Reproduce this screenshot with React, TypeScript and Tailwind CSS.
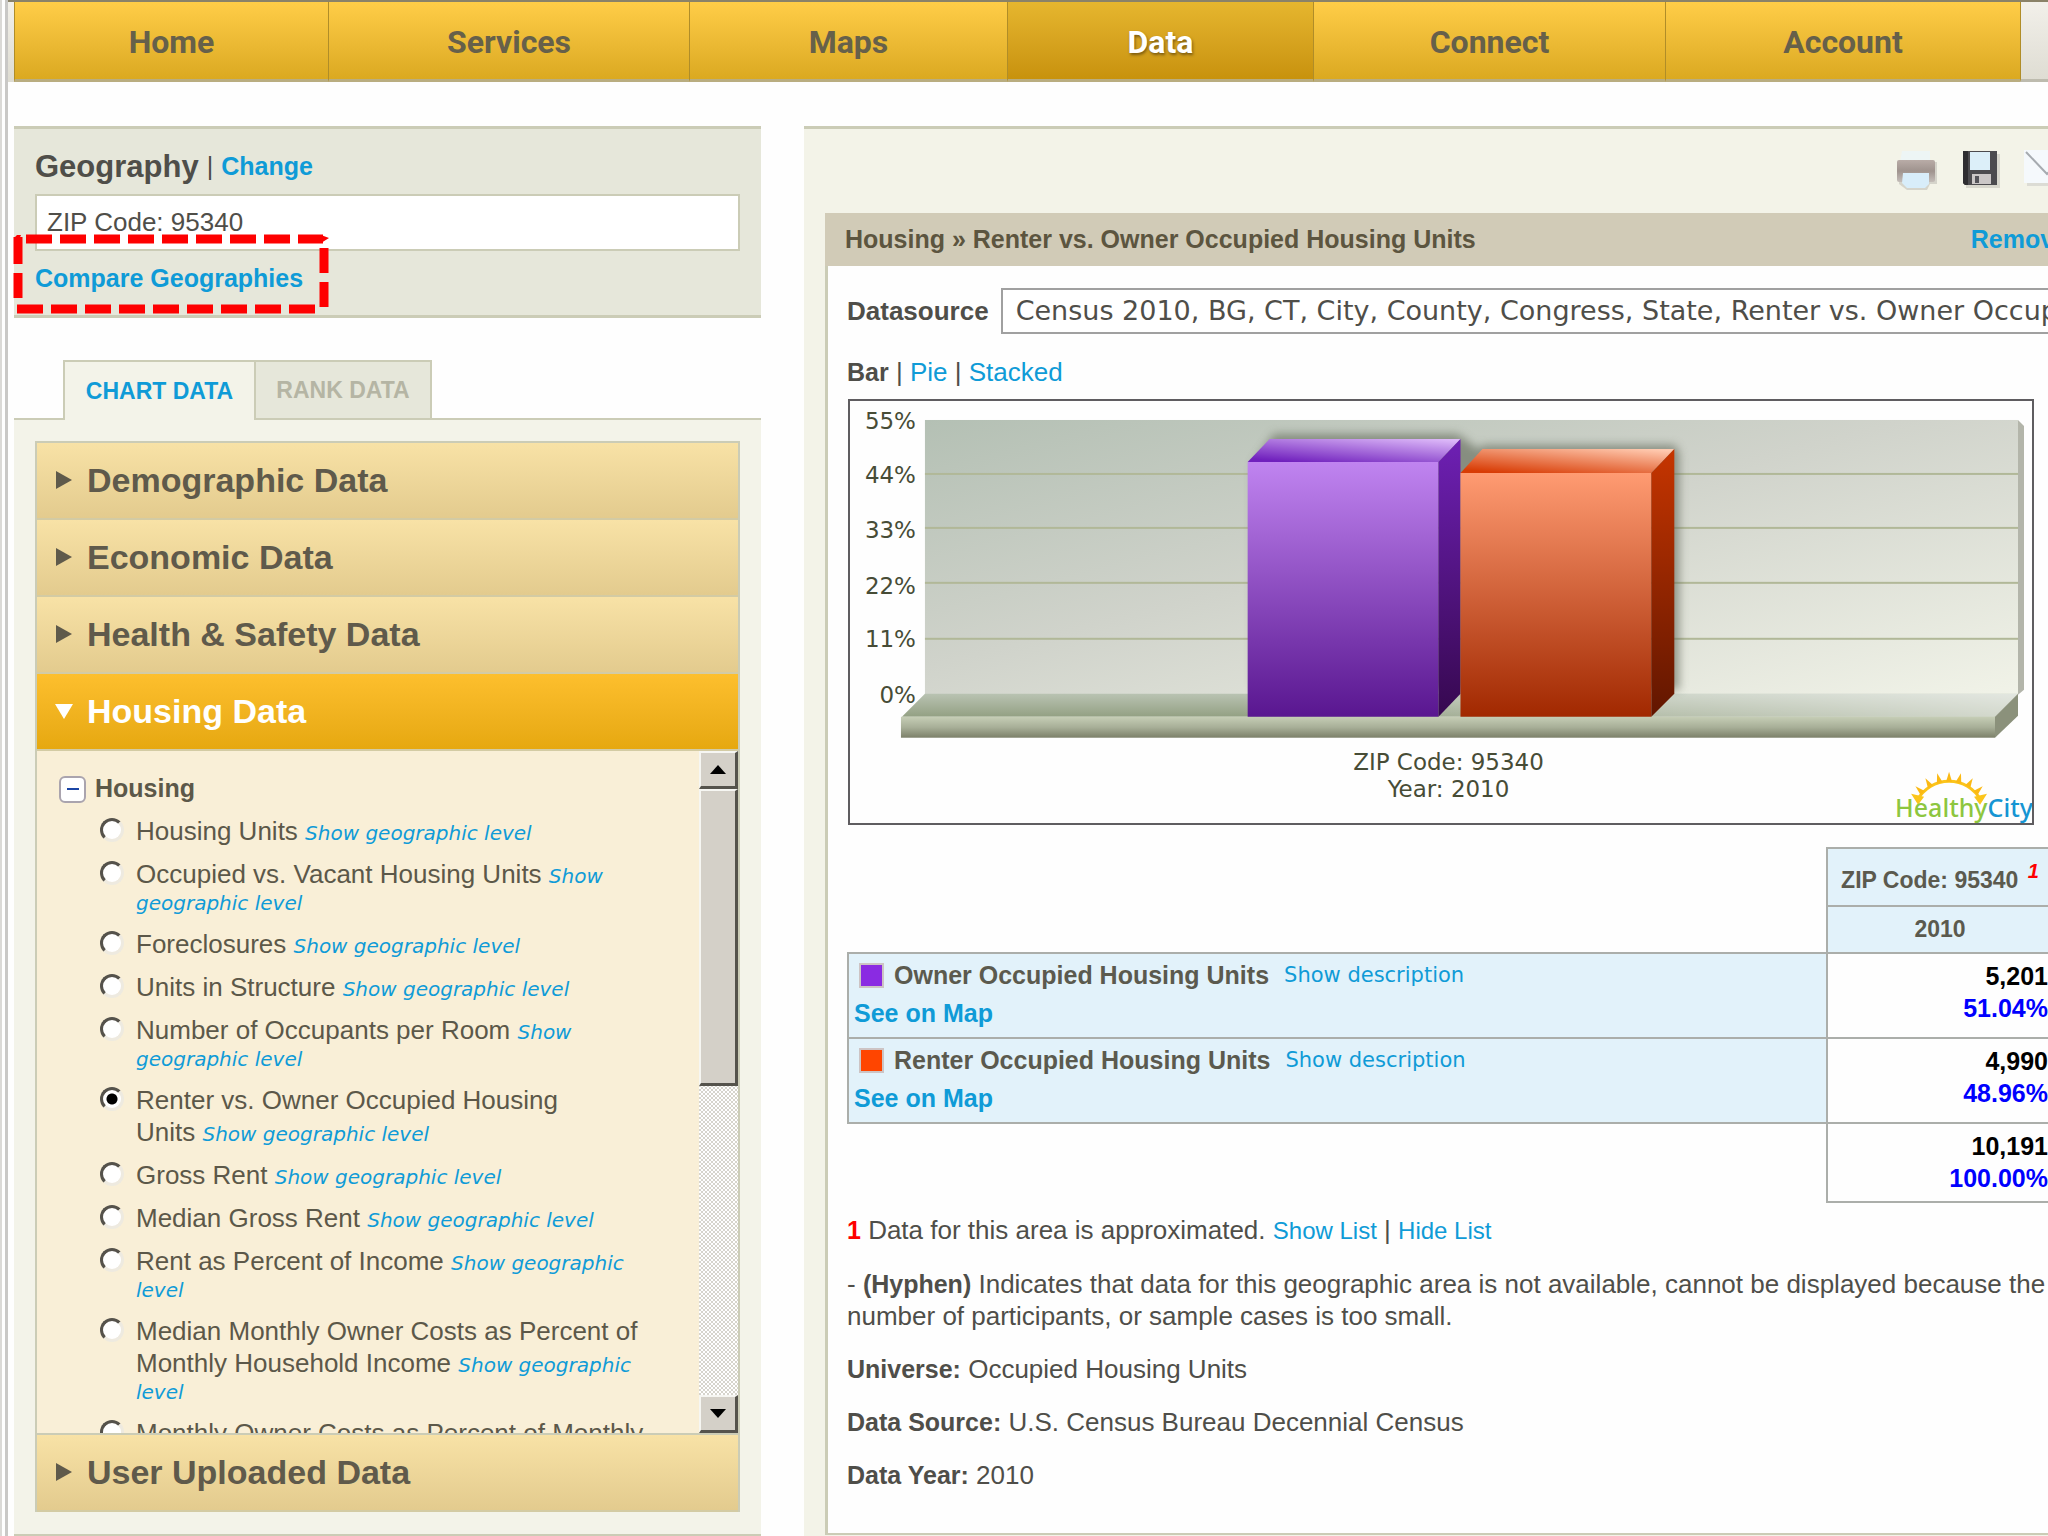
import React, { useState } from 'react';
import clsx from 'clsx';

const navItems = ['Home', 'Services', 'Maps', 'Data', 'Connect', 'Account'];

type IndicatorLine = { text?: string; link?: string };

const indicators: { id: string; lines: IndicatorLine[] }[] = [
  { id: 'units', lines: [{ text: 'Housing Units', link: 'Show geographic level' }] },
  { id: 'vacant', lines: [{ text: 'Occupied vs. Vacant Housing Units', link: 'Show' }, { link: 'geographic level' }] },
  { id: 'foreclosures', lines: [{ text: 'Foreclosures', link: 'Show geographic level' }] },
  { id: 'structure', lines: [{ text: 'Units in Structure', link: 'Show geographic level' }] },
  { id: 'occupants', lines: [{ text: 'Number of Occupants per Room', link: 'Show' }, { link: 'geographic level' }] },
  { id: 'tenure', lines: [{ text: 'Renter vs. Owner Occupied Housing' }, { text: 'Units', link: 'Show geographic level' }] },
  { id: 'gross', lines: [{ text: 'Gross Rent', link: 'Show geographic level' }] },
  { id: 'median-gross', lines: [{ text: 'Median Gross Rent', link: 'Show geographic level' }] },
  { id: 'rent-percent', lines: [{ text: 'Rent as Percent of Income', link: 'Show geographic' }, { link: 'level' }] },
  {
    id: 'median-costs',
    lines: [
      { text: 'Median Monthly Owner Costs as Percent of' },
      { text: 'Monthly Household Income', link: 'Show geographic' },
      { link: 'level' },
    ],
  },
  { id: 'costs', lines: [{ text: 'Monthly Owner Costs as Percent of Monthly' }] },
];

const rows = [
  { label: 'Owner Occupied Housing Units', swatch: 'bg-[#8a2be2]', count: '5,201', percent: '51.04%' },
  { label: 'Renter Occupied Housing Units', swatch: 'bg-[#ff4500]', count: '4,990', percent: '48.96%' },
];

const gridLines = [74, 128, 183, 239];
const axisLabels = [
  { label: '55%', y: 29 },
  { label: '44%', y: 83 },
  { label: '33%', y: 138 },
  { label: '22%', y: 194 },
  { label: '11%', y: 247 },
  { label: '0%', y: 303 },
];

function NavBar() {
  return (
    <nav className="grid h-[82px] grid-cols-[314fr_361fr_318fr_306fr_352fr_355fr_28fr] border-t-2 border-[#8a8268] bg-gradient-to-b from-[#f2f0ea] to-[#dedcd2] pl-[6px]">
      {navItems.map((item) => (
        <a
          key={item}
          href="#"
          className={clsx(
            'flex items-center justify-center border-b-[3px] border-l border-b-[#b9ad80] border-l-[#b08d28] pt-[3px] font-[Roboto,sans-serif] text-[32px] font-bold',
            item === 'Data'
              ? 'bg-gradient-to-b from-[#e6b62e] to-[#c8920c] text-white [text-shadow:1px_2px_3px_#7a5a10]'
              : 'bg-gradient-to-b from-[#ffcd47] to-[#dba920] text-[#66604a]'
          )}
        >
          {item}
        </a>
      ))}
      <span className="border-b-[3px] border-l border-b-[#bdbbae] border-l-[#b08d28]" />
    </nav>
  );
}

function DashedHighlight() {
  return (
    <svg className="pointer-events-none absolute -left-px top-[105px]" width="318" height="80" viewBox="0 0 318 80" fill="none" stroke="#fe0000" strokeWidth="9" aria-hidden="true">
      <path d="M13 5H310" strokeDasharray="26 8" />
      <path d="M4 75H303" strokeDasharray="26 8" />
      <path d="M5 3V30M5 39V64M311 14V39M311 48V73" />
      <path d="M1 4L4 1L8 1L5 8ZM308 1L316 4L308 9Z" fill="#fe0000" stroke="none" />
    </svg>
  );
}

function GeographyBox() {
  return (
    <section className="relative border-y-[3px] border-[#cbccb6] bg-[#e6e7da] px-[21px] pb-[21px] pt-[22px]">
      <div className="flex h-8 items-center gap-2 text-[25px] font-bold">
        <label htmlFor="geography" className="text-[31px]">Geography</label>
        <span className="font-normal">|</span>
        <a href="#" className="text-[#0f9bd7]">Change</a>
      </div>
      <input
        id="geography"
        readOnly
        defaultValue="ZIP Code: 95340"
        className="mt-[11px] block h-[57px] w-full border-2 border-[#cbccb6] bg-white px-[10px] text-[26px] outline-none"
      />
      <a href="#" className="mt-[11px] block text-[25px] font-bold leading-8 text-[#0f9bd7]">Compare Geographies</a>
      <DashedHighlight />
    </section>
  );
}

function Arrow({ open }: { open?: boolean }) {
  return (
    <svg width="20" height="20" viewBox="0 0 20 20" fill="currentColor" aria-hidden="true">
      <path d={open ? 'M1 2H19L10 17Z' : 'M2 0L18 9L2 18Z'} />
    </svg>
  );
}

function AccordionHeader({ title, open }: { title: string; open?: boolean }) {
  return (
    <button
      type="button"
      aria-expanded={!!open}
      className={clsx(
        'flex h-[77px] w-full items-center gap-[13px] border-b-2 border-[#d3cba4] pl-[17px] text-left text-[34px] font-bold',
        open
          ? 'bg-gradient-to-b from-[#fdbf2d] to-[#e6a80f] text-white'
          : 'bg-gradient-to-b from-[#f8e2a6] to-[#e3cb8e] text-[#5f5a4b]'
      )}
    >
      <Arrow open={open} />
      {title}
    </button>
  );
}

function ScrollBar() {
  const raised = 'flex items-center justify-center border-2 border-b-[3px] border-r-[3px] border-[#f6f6f2] border-b-[#55534c] border-r-[#55534c] bg-[#d4d0c8]';
  return (
    <div className="flex w-[39px] flex-none flex-col bg-[repeating-conic-gradient(#d6d4cc_0_25%,#ffffff_0_50%)] bg-[length:4px_4px]">
      <button type="button" aria-label="Scroll up" className={clsx(raised, 'h-[38px]')}>
        <svg width="16" height="9" viewBox="0 0 16 9" aria-hidden="true"><path d="M0 9L8 0L16 9Z" /></svg>
      </button>
      <div className={clsx(raised, 'h-[297px]')} />
      <button type="button" aria-label="Scroll down" className={clsx(raised, 'mt-auto h-[38px]')}>
        <svg width="16" height="9" viewBox="0 0 16 9" aria-hidden="true"><path d="M0 0L8 9L16 0Z" /></svg>
      </button>
    </div>
  );
}

function IndicatorList() {
  const [selected, setSelected] = useState('tenure');

  return (
    <div className="flex h-[684px] overflow-hidden border-b-2 border-[#cbccb6] bg-[#f9efd7] text-[#5c5849]">
      <div className="flex-1 whitespace-nowrap pl-[22px] pt-[22px]">
        <div className="flex h-8 items-center gap-[9px]">
          <button type="button" aria-label="Collapse Housing" className="flex h-[27px] w-[27px] items-center justify-center rounded-[6px] border-2 border-[#aaa4ae] bg-white">
            <span className="h-[2px] w-3 bg-[#1b45a5]" />
          </button>
          <span className="text-[25px] font-bold">Housing</span>
        </div>
        <ul className="mt-[10px] flex flex-col gap-[11px] pl-[41px]">
          {indicators.map(({ id, lines }) => (
            <li key={id} className="flex items-start gap-3">
              <input
                type="radio"
                name="indicator"
                id={id}
                checked={selected === id}
                onChange={() => setSelected(id)}
                className="mt-[3px] h-6 w-6 flex-none appearance-none rounded-full border-[3px] border-[#55524b] border-b-[#eeeae0] border-r-[#eeeae0] bg-white checked:bg-[radial-gradient(circle,#000_0_5px,#fff_6px)]"
              />
              <div>
                {lines.map(({ text, link }, i) => (
                  <div key={i} className={text ? 'h-8 leading-8' : 'h-[27px] leading-[27px]'}>
                    {text && <label htmlFor={id} className="text-[26px]">{text} </label>}
                    {link && <a href="#" className="font-['DejaVu_Sans',sans-serif] text-[20px] italic text-[#0f9bd7]">{link}</a>}
                  </div>
                ))}
              </div>
            </li>
          ))}
        </ul>
      </div>
      <ScrollBar />
    </div>
  );
}

function Sidebar() {
  return (
    <aside className="w-[747px] flex-none">
      <GeographyBox />
      <div className="mt-[42px] flex items-end text-[23px] font-bold">
        <span className="w-[49px] border-b-2 border-[#cbccb6]" />
        <button type="button" className="h-[60px] w-[193px] border-x-2 border-t-2 border-[#cbccb6] bg-[#f3f3e9] text-[#0f9bd7]">CHART DATA</button>
        <button type="button" className="h-[60px] w-[176px] border-2 border-l-0 border-[#cbccb6] bg-[#e6e7da] text-[#b5b5a4]">RANK DATA</button>
        <span className="flex-1 border-b-2 border-[#cbccb6]" />
      </div>
      <div className="border-b-2 border-[#cbccb6] bg-[#f3f3e9] px-[21px] pb-[22px] pt-[21px]">
        <div className="border-2 border-b-0 border-[#cbccb6]">
          <AccordionHeader title="Demographic Data" />
          <AccordionHeader title="Economic Data" />
          <AccordionHeader title="Health & Safety Data" />
          <AccordionHeader title="Housing Data" open />
          <IndicatorList />
          <AccordionHeader title="User Uploaded Data" />
        </div>
      </div>
    </aside>
  );
}

function PrinterIcon() {
  return (
    <svg width="42" height="42" viewBox="0 0 42 42" aria-hidden="true">
      <defs>
        <linearGradient id="printer" x1="0" y1="0" x2="0" y2="1">
          <stop offset="0" stopColor="#b9aca7" />
          <stop offset="0.5" stopColor="#9f938e" />
          <stop offset="1" stopColor="#c4bdb9" />
        </linearGradient>
      </defs>
      <path d="M3 12H41V34H34L31 40H11L3 34Z" fill="#d5d4cb" />
      <path d="M6 1H34V12H4Z" fill="#edf5f5" />
      <rect x="1" y="10" width="38" height="22" rx="2" fill="url(#printer)" />
      <path d="M7 23H33V34L29 38H11L6 33Z" fill="#d8edfa" />
    </svg>
  );
}

function FloppyIcon() {
  return (
    <svg width="38" height="38" viewBox="0 0 38 38" aria-hidden="true">
      <rect x="4" y="4" width="34" height="34" fill="#d8d7cd" />
      <path d="M1 1H35V35H3L1 33Z" fill="#4c4b4f" />
      <path d="M1 1H6V35H3L1 33Z" fill="#2e2d31" />
      <rect x="8" y="2" width="20" height="18" fill="#dceff9" />
      <rect x="10" y="24" width="19" height="10" fill="#cbc7c7" />
      <rect x="13" y="26" width="4" height="7" fill="#55545a" />
    </svg>
  );
}

function MailIcon() {
  return (
    <svg width="48" height="38" viewBox="0 0 48 38" aria-hidden="true">
      <rect x="3" y="4" width="45" height="32" fill="#dcdcd5" />
      <rect width="46" height="33" fill="#f5f9fc" />
      <path d="M2 2L23 24L44 2" fill="none" stroke="#a6abb0" strokeWidth="2" />
    </svg>
  );
}

function Logo() {
  const rays = [-47, -31, -15, 0, 15, 31, 47];
  return (
    <g>
      <path d="M1068 400A36 36 0 0 1 1132 400" fill="none" stroke="#fbc51b" strokeWidth="3" />
      <path d="M1062 393L1075 396L1069 404ZM1138 393L1125 396L1131 404Z" fill="#fbc51b" />
      {rays.map((angle) => (
        <path key={angle} d="M1097 381L1100 371L1103 381Z" fill="#fbb914" transform={`rotate(${angle} 1100 417)`} />
      ))}
      <text x="1046" y="416" fontFamily="Noto Sans, sans-serif" fontSize="25" fontWeight="500" fill="#8dc63f">
        Healthy<tspan fill="#1695d3">City</tspan>
      </text>
    </g>
  );
}

function HousingChart() {
  return (
    <svg viewBox="0 0 1183 422" className="block w-full" role="img" aria-label="Renter vs. Owner Occupied Housing Units">
      <defs>
        <linearGradient id="wall" x1="0" y1="0" x2="1" y2="1">
          <stop offset="0" stopColor="#b4c0b4" />
          <stop offset="0.45" stopColor="#d0d3cb" />
          <stop offset="1" stopColor="#f1f3e8" />
        </linearGradient>
        <linearGradient id="floor" x1="0" y1="0" x2="0" y2="1">
          <stop offset="0" stopColor="#b9c3b2" />
          <stop offset="1" stopColor="#93a083" />
        </linearGradient>
        <linearGradient id="floorLight" x1="0" y1="0" x2="1" y2="0">
          <stop offset="0.3" stopColor="#fff" stopOpacity="0" />
          <stop offset="1" stopColor="#fff" stopOpacity="0.6" />
        </linearGradient>
        <linearGradient id="ledge" x1="0" y1="0" x2="0" y2="1">
          <stop offset="0" stopColor="#c6ceb6" />
          <stop offset="0.5" stopColor="#a8af98" />
          <stop offset="1" stopColor="#7c8069" />
        </linearGradient>
        <linearGradient id="purpleFront" x1="0" y1="0" x2="0" y2="1">
          <stop offset="0" stopColor="#c084f0" />
          <stop offset="1" stopColor="#591690" />
        </linearGradient>
        <linearGradient id="purpleSide" x1="0" y1="0" x2="0" y2="1">
          <stop offset="0" stopColor="#6e20b4" />
          <stop offset="1" stopColor="#36084f" />
        </linearGradient>
        <linearGradient id="purpleTop" gradientUnits="userSpaceOnUse" x1="500" y1="66" x2="503" y2="30">
          <stop offset="0" stopColor="#7020bd" />
          <stop offset="1" stopColor="#dfbcfa" />
        </linearGradient>
        <linearGradient id="orangeFront" x1="0" y1="0" x2="0" y2="1">
          <stop offset="0" stopColor="#ff9b72" />
          <stop offset="1" stopColor="#a12800" />
        </linearGradient>
        <linearGradient id="orangeSide" x1="0" y1="0" x2="0" y2="1">
          <stop offset="0" stopColor="#c63500" />
          <stop offset="1" stopColor="#611600" />
        </linearGradient>
        <linearGradient id="orangeTop" gradientUnits="userSpaceOnUse" x1="700" y1="76" x2="703" y2="40">
          <stop offset="0" stopColor="#d83c05" />
          <stop offset="1" stopColor="#ffcab0" />
        </linearGradient>
        <filter id="soft" x="-10%" y="-10%" width="120%" height="120%">
          <feGaussianBlur stdDeviation="5" />
        </filter>
      </defs>

      {/* Back wall and floor */}
      <rect x="75" y="19" width="1094" height="275" fill="url(#wall)" />
      <path d="M1169 19L1175 25V289L1169 294Z" fill="#b3b5aa" />
      {gridLines.map((y) => (
        <rect key={y} x="75" y={y - 2} width="1094" height="2" fill="#b1b898" />
      ))}
      <path d="M75 293H1169L1146 316H52Z" fill="url(#floor)" />
      <path d="M75 293H1169L1146 316H52Z" fill="url(#floorLight)" />
      <rect x="51" y="316" width="1095" height="21" fill="url(#ledge)" />
      <path d="M1146 316L1169 293V315L1146 337Z" fill="#8b917b" />

      {/* Bars */}
      <path d="M404 63L424 33H608L630 49V289H404ZM608 63L634 44H826L830 53V289H620Z" fill="#5c6352" opacity="0.6" filter="url(#soft)" />
      <rect x="398" y="61" width="191" height="255" fill="url(#purpleFront)" />
      <path d="M398 61L420 38H611L589 61Z" fill="url(#purpleTop)" />
      <path d="M589 61L611 38V293L589 316Z" fill="url(#purpleSide)" />
      <rect x="611" y="72" width="191" height="244" fill="url(#orangeFront)" />
      <path d="M611 72L633 48H825L802 72Z" fill="url(#orangeTop)" />
      <path d="M802 72L825 48V293L802 316Z" fill="url(#orangeSide)" />

      {/* Labels */}
      <g fontFamily="DejaVu Sans, sans-serif" fontSize="23" fill="#474c36">
        {axisLabels.map(({ label, y }) => (
          <text key={label} x="66" y={y - 1} textAnchor="end">{label}</text>
        ))}
        <text x="599" y="369" textAnchor="middle">ZIP Code: 95340</text>
        <text x="599" y="396" textAnchor="middle">Year: 2010</text>
      </g>
      <Logo />
    </svg>
  );
}

function DataTable() {
  const head = 'border-2 border-[#abaeaa] bg-[#e2f2fa] text-[23px] font-bold text-[#5b5a4e]';
  const value = 'border-2 border-[#abaeaa] pr-1 pt-[6px] text-right align-top text-[25px] font-bold leading-8';
  return (
    <table className="mt-[22px] w-full border-collapse">
      <thead>
        <tr className="h-[58px]">
          <td rowSpan={2} />
          <th className={clsx(head, 'w-[226px] whitespace-nowrap pt-2')}>
            ZIP Code: 95340 <sup className="ml-[3px] text-[20px] italic text-[#fe0000]">1</sup>
          </th>
        </tr>
        <tr className="h-[47px]">
          <th className={head}>2010</th>
        </tr>
      </thead>
      <tbody>
        {rows.map((row) => (
          <tr key={row.label} className="h-[85px]">
            <th scope="row" className="border-2 border-[#abaeaa] bg-[#e2f2fa] px-[5px] pt-[6px] text-left align-top text-[25px]">
              <div className="flex h-8 items-center">
                <span className={clsx('ml-[5px] h-[25px] w-[25px] border-2 border-[#cdc4c4]', row.swatch)} />
                <span className="ml-[10px] text-[#5b5a4e]">{row.label}</span>
                <a href="#" className="ml-[15px] font-['DejaVu_Sans',sans-serif] text-[21px] font-normal text-[#0f9bd7]">Show description</a>
              </div>
              <a href="#" className="mt-[5px] block leading-8 text-[#0f9bd7]">See on Map</a>
            </th>
            <td className={value}>
              <div className="text-black">{row.count}</div>
              <div className="text-[#0000fe]">{row.percent}</div>
            </td>
          </tr>
        ))}
        <tr className="h-[79px]">
          <td />
          <td className={value}>
            <div className="text-black">10,191</div>
            <div className="text-[#0000fe]">100.00%</div>
          </td>
        </tr>
      </tbody>
    </table>
  );
}

function Notes() {
  return (
    <div className="mt-[11px] flex flex-col gap-[21px] whitespace-nowrap text-[26px] leading-8">
      <p>
        <b className="text-[25px] text-[#fe0000]">1</b> Data for this area is approximated.{' '}
        <a href="#" className="text-[24px] text-[#0f9bd7]">Show List</a> | <a href="#" className="text-[24px] text-[#0f9bd7]">Hide List</a>
      </p>
      <p>
        - <b className="text-[25px]">(Hyphen)</b> Indicates that data for this geographic area is not available, cannot be displayed because the
        <br />
        number of participants, or sample cases is too small.
      </p>
      <p><b className="text-[25px]">Universe:</b> Occupied Housing Units</p>
      <p><b className="text-[25px]">Data Source:</b> U.S. Census Bureau Decennial Census</p>
      <p><b className="text-[25px]">Data Year:</b> 2010</p>
    </div>
  );
}

function Report() {
  return (
    <main className="-mr-6 min-w-0 flex-1 border-t-[3px] border-[#cbccb6] bg-[#f3f3e8] pl-[21px]">
      <div className="flex h-[84px] items-start justify-end gap-6 pt-[21px]">
        <button type="button" aria-label="Print"><PrinterIcon /></button>
        <button type="button" aria-label="Save"><FloppyIcon /></button>
        <button type="button" aria-label="Email"><MailIcon /></button>
      </div>
      <div className="flex h-[53px] items-center justify-between bg-[#d1cbb7] pl-5 pr-1 text-[25px] font-bold">
        <h2 className="text-[#5c553f]">Housing » Renter vs. Owner Occupied Housing Units</h2>
        <a href="#" className="text-[#0f9bd7]">Remove</a>
      </div>
      <div className="border-b-2 border-l-[3px] border-[#cbccb6] bg-[#fefefe] pb-[42px] pl-[19px] pr-[18px] pt-[22px]">
        <div className="-mr-5 flex items-center gap-3">
          <label htmlFor="datasource" className="text-[26px] font-bold">Datasource</label>
          <select id="datasource" className="h-[46px] min-w-0 flex-1 appearance-none border-2 border-[#a0a0a0] bg-white pl-[13px] font-['DejaVu_Sans',sans-serif] text-[27px] outline-none">
            <option>Census 2010, BG, CT, City, County, Congress, State, Renter vs. Owner Occupied Housing Units</option>
          </select>
        </div>
        <div className="mt-[22px] text-[26px] leading-8">
          <b className="text-[25px]">Bar</b> | <a href="#" className="text-[#0f9bd7]">Pie</a> | <a href="#" className="text-[#0f9bd7]">Stacked</a>
        </div>
        <div className="ml-px mr-5 mt-[11px] border-2 border-[#5f5d60]">
          <HousingChart />
        </div>
        <DataTable />
        <Notes />
      </div>
    </main>
  );
}

export default function App() {
  return (
    <div className="flex min-h-screen overflow-hidden bg-[#fefefe] font-['Liberation_Sans',Arial,sans-serif] text-[#4f4e49]">
      <div className="w-2 flex-none border-l-2 border-r-[3px] border-l-[#dad9d6] border-r-[#c9c8c6]" />
      <div className="min-w-0 flex-1">
        <NavBar />
        <div className="flex gap-[43px] pl-[6px] pt-[44px]">
          <Sidebar />
          <Report />
        </div>
      </div>
    </div>
  );
}
